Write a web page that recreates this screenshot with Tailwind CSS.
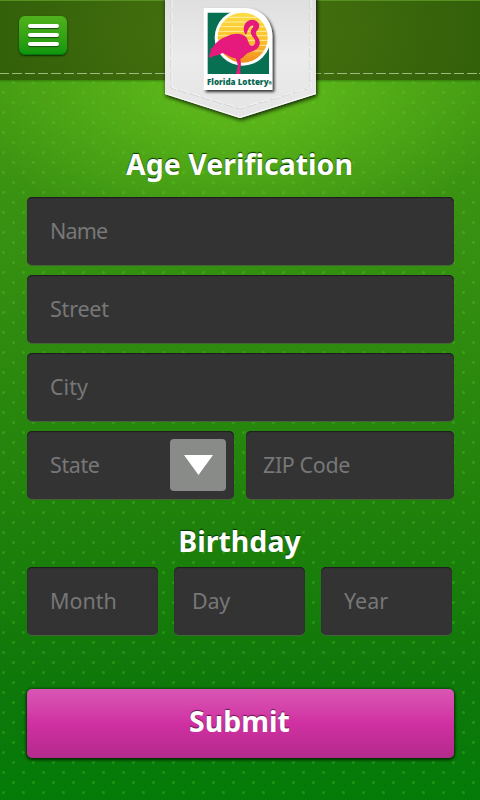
<!DOCTYPE html>
<html lang="en">
<head>
<meta charset="utf-8">
<meta name="viewport" content="width=device-width, initial-scale=1">
<title>Age Verification</title>
<script src="https://cdn.jsdelivr.net/npm/@tailwindcss/browser@4"></script>
</head>
<body class="w-[480px] h-[800px] overflow-hidden font-['Noto_Sans',sans-serif]">
<div class="relative flex h-[800px] w-[480px] flex-col bg-[radial-gradient(circle_at_3.5px_12.5px,rgba(90,225,40,0.25)_1px,transparent_2px),radial-gradient(circle_at_13.5px_2.5px,rgba(90,225,40,0.25)_1px,transparent_2px),radial-gradient(ellipse_270px_170px_at_240px_80px,rgba(112,205,32,0.72),transparent),linear-gradient(#449a12_80px,#3a9212_200px,#21820b_500px,#0f780a_680px,#047b08_800px)] bg-[length:20px_20px,20px_20px,100%_100%,100%_100%]">
  <header class="flex h-20 shrink-0 flex-col border-t border-[#578f20] bg-[radial-gradient(ellipse_260px_150px_at_240px_30px,#4a7410,#315f09)] shadow-[0_1px_2px_rgba(20,70,0,0.45)]">
    <div class="flex h-[72px] items-start pt-[15px] pl-[19px]">
      <button aria-label="Menu" class="flex h-[39px] w-12 flex-col items-center gap-[5px] rounded-[6px] bg-linear-to-b from-[#4fb21c] to-[#08960d] pt-[8px] shadow-[0_1px_2px_rgba(0,30,0,0.8),inset_0_-1px_0_#05720a]">
        <span class="h-1 w-[31px] rounded-full bg-white shadow-[0_1px_1px_#174d10]"></span>
        <span class="h-1 w-[31px] rounded-full bg-white shadow-[0_1px_1px_#174d10]"></span>
        <span class="h-1 w-[31px] rounded-full bg-white shadow-[0_1px_1px_#174d10]"></span>
      </button>
    </div>
    <div class="h-px bg-[repeating-linear-gradient(90deg,#9dbb80_0px,#9dbb80_10px,transparent_10px,transparent_13px)] bg-[position:-1px_0]"></div>
  </header>

  <svg class="absolute top-0 left-[155px]" width="170" height="130" viewBox="0 0 170 130" role="img" aria-label="Florida Lottery">
    <defs>
      <linearGradient id="paper" x2="0" y2="1"><stop offset="0" stop-color="#dedede"/><stop offset=".5" stop-color="#ebebeb"/><stop offset="1" stop-color="#e5e5e5"/></linearGradient>
      <linearGradient id="sun" x2="0" y2="1"><stop offset="0" stop-color="#fcdc42"/><stop offset=".55" stop-color="#fbc12d"/><stop offset="1" stop-color="#f28c20"/></linearGradient>
      <filter id="drop" x="-20%" y="-20%" width="140%" height="140%"><feDropShadow dx="1" dy="2" stdDeviation="2.200" flood-color="#000" flood-opacity=".85"/></filter>
      <filter id="lift" x="-20%" y="-20%" width="150%" height="150%"><feDropShadow dx="6" dy="6" stdDeviation="4" flood-color="#000" flood-opacity=".8"/></filter>
    </defs>
    <path d="M10-6H161V94L85 118 10 94Z" fill="url(#paper)" filter="url(#drop)"/>
    <path d="M10 93L85 117 161 93V94L85 118 10 94Z" fill="#fff"/>
    <path d="M16 0V88L85 109 155 88V0" fill="none" stroke="#d0d0d0" stroke-width="1" stroke-dasharray="9 3"/>
    <path d="M17 0V87.500L85 108 156 87.500V0" fill="none" stroke="#f5f5f5" stroke-width="1" stroke-dasharray="9 3"/>
    <g transform="translate(40 0) scale(.33333)">
      <path d="M26 24H148C196 24 232 60 232 110V270H26Z" fill="#fff" filter="url(#lift)"/>
      <path d="M38 38H143V113H222V222H38Z" fill="#087052"/>
      <circle cx="143" cy="113" r="84" fill="#fff"/>
      <circle cx="143" cy="113" r="75" fill="url(#sun)"/>
      <path d="M102 52H184M86 66H200M76 80H210M71 94H215M69 107H217M69 121H217M71 136H215M76 153H210" stroke="#fff3b4" stroke-width="2.500"/>
      <path d="M152 104C145 96 144 83 150 72C156 60 174 55 185 64C196 72 194 83 187 91C181 98 181 102 187 110C198 123 196 138 186 146C174 156 161 154 152 164C147 169 142 174 136 177L138 192 133 222H123L129 194 122 175C106 173 94 163 83 159C72 163 64 169 55 168C49 175 43 174 42 168C44 162 45 158 48 154C44 151 47 145 52 144C64 125 78 115 98 108C116 100 139 98 153 111C158 116 159 126 164 134C172 142 182 134 181 125C180 115 166 106 167 94C168 86 176 83 175 77C169 75 166 80 162 84C158 89 157 99 152 104Z" fill="#e51a7c"/>
      <path d="M132 177L131 195 134 222" fill="none" stroke="#e51a7c" stroke-width="6"/>
      <text x="36" y="255" font-family="Open Sans, sans-serif" font-size="27" font-weight="800" fill="#07684f" textLength="195" lengthAdjust="spacingAndGlyphs">Florida Lottery<tspan font-size="14">®</tspan></text>
    </g>
  </svg>

  <main class="flex flex-col pr-[26px] pl-[27px]">
    <h1 class="mt-[63px] flex h-[42px] items-center justify-center whitespace-nowrap text-[28.500px] font-bold text-white [text-shadow:0_-1px_1px_rgba(0,40,0,0.9)]"><span class="relative -left-px">Age Verification</span></h1>
    <div class="mt-[12px] flex flex-col gap-[10px] text-[21.500px] text-[#777]">
      <div class="flex h-[68px] items-center rounded-[5px] bg-[#333] pl-[23px] shadow-[inset_0_1px_1px_#1c1c1c,0_1px_0_#45623a]"><span class="tracking-[-0.8px]">Name</span></div>
      <div class="flex h-[68px] items-center rounded-[5px] bg-[#333] pl-[23px] shadow-[inset_0_1px_1px_#1c1c1c,0_1px_0_#45623a]"><span class="tracking-[-0.2px]">Street</span></div>
      <div class="flex h-[68px] items-center rounded-[5px] bg-[#333] pl-[23px] shadow-[inset_0_1px_1px_#1c1c1c,0_1px_0_#45623a]"><span>City</span></div>
      <div class="flex gap-3">
        <div class="flex h-[68px] w-[207px] items-center justify-between rounded-[5px] bg-[#333] pr-2 pl-[23px] shadow-[inset_0_1px_1px_#1c1c1c,0_1px_0_#45623a]">
          <span class="tracking-[-0.4px]">State</span>
          <div class="flex h-[52px] w-14 items-center justify-center rounded-[4px] bg-[#898b88]"><svg width="29" height="20" viewBox="0 0 29 20"><path d="M0 0H29L14.500 20Z" fill="#fff"/></svg></div>
        </div>
        <div class="flex h-[68px] flex-1 items-center rounded-[5px] bg-[#333] pl-[17px] shadow-[inset_0_1px_1px_#1c1c1c,0_1px_0_#45623a]"><span class="tracking-[-0.4px]">ZIP Code</span></div>
      </div>
    </div>
    <h2 class="mt-[21px] flex h-[42px] items-center justify-center text-[28.500px] font-bold text-white [text-shadow:0_-1px_1px_rgba(0,40,0,0.9)]"><span class="relative -left-px">Birthday</span></h2>
    <div class="mt-[5px] flex gap-4 text-[21.500px] text-[#777]">
      <div class="flex h-[68px] w-[131px] items-center rounded-[5px] bg-[#333] pl-[23px] shadow-[inset_0_1px_1px_#1c1c1c,0_1px_0_#45623a]"><span>Month</span></div>
      <div class="flex h-[68px] w-[131px] items-center rounded-[5px] bg-[#333] pl-[18px] shadow-[inset_0_1px_1px_#1c1c1c,0_1px_0_#45623a]"><span class="tracking-[-0.3px]">Day</span></div>
      <div class="flex h-[68px] w-[131px] items-center rounded-[5px] bg-[#333] pl-[23px] shadow-[inset_0_1px_1px_#1c1c1c,0_1px_0_#45623a]"><span>Year</span></div>
    </div>
    <button class="mt-[54px] flex h-[69px] items-center justify-center rounded-[5px] bg-linear-to-b from-[#d956b4] via-[#d030a2] to-[#b32a8c] pb-1 text-[28.500px] font-bold text-white shadow-[0_1px_3px_1px_rgba(0,25,0,0.85)] [text-shadow:0_-1px_1px_#64174e]"><span class="relative -left-px">Submit</span></button>
  </main>
</div>
</body>
</html>
